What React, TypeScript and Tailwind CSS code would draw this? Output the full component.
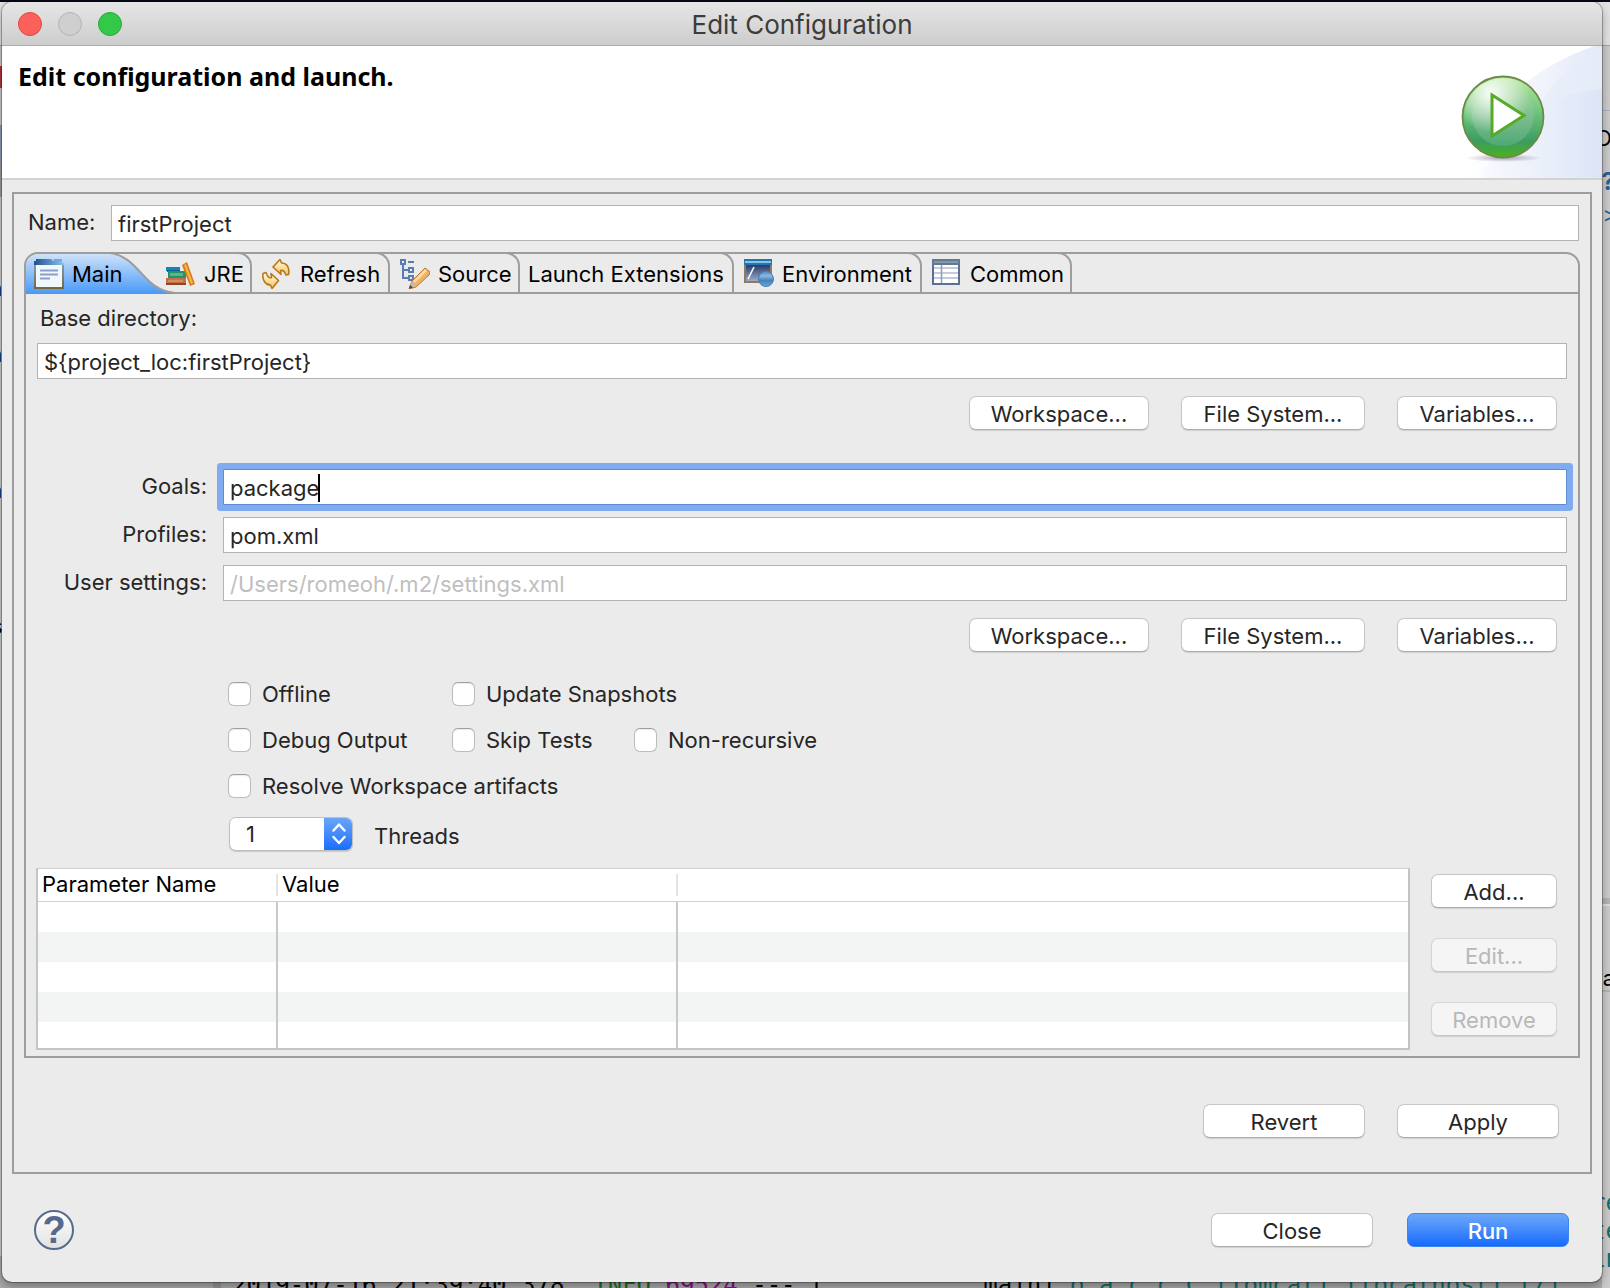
import type { ReactNode } from 'react';

const textField =
  'h-9 w-full min-w-0 border border-[#b3b3b3] bg-white px-[6px] pt-[2px] text-[22px] text-[#262626] outline-none';

const pushButton =
  'h-[34px] shrink-0 rounded-[7px] border border-[#c6c6c6] border-b-[#adadad] bg-white pt-[2px] text-[22px] leading-none text-[#262626] shadow-[0_1px_1px_rgba(0,0,0,0.12)] disabled:border-[#d5d5d5] disabled:border-b-[#c8c8c8] disabled:bg-[#f5f5f5] disabled:text-[#b8b8b8]';

function MainIcon() {
  return (
    <svg width="30" height="30" viewBox="0 0 30 30">
      <defs>
        <linearGradient id="mainBar" x1="0" x2="1">
          <stop offset="0" stopColor="#1f4f8c" />
          <stop offset="1" stopColor="#8fc4ea" />
        </linearGradient>
        <linearGradient id="mainFrame" x1="0" y1="0" x2="0" y2="1">
          <stop offset="0" stopColor="#7f9fb5" />
          <stop offset="1" stopColor="#77683e" />
        </linearGradient>
      </defs>
      <rect x="1" y="5" width="28" height="24" fill="#f0f8fb" stroke="url(#mainFrame)" strokeWidth="2" />
      <path d="M2 0H17L19 2H28V4H30V6H0V2H2Z" fill="url(#mainBar)" />
      <path d="M19 0h9v2h-8z" fill="#76a9d6" />
      <path d="M6 11.5H24M6 15.5H24M6 19.5H16" stroke="#8a9fd0" strokeWidth="2" />
    </svg>
  );
}

function JreIcon() {
  return (
    <svg width="30" height="30" viewBox="0 0 30 30">
      <g transform="translate(0 4)">
        <rect y="4" width="14" height="4" fill="#1484bd" />
        <rect x="1" y="7" width="13" height="2" fill="#12608c" />
        <rect x="2" y="8" width="18" height="8" fill="#25916c" />
        <rect x="4" y="10" width="13" height="3" fill="#59b783" />
        <rect y="15" width="20" height="7" fill="#c2714a" />
        <rect x="2" y="17" width="15" height="2" fill="#d88c5e" />
        <rect y="20" width="20" height="2" fill="#8b4729" />
        <path d="M16 2L21 -1L29 21L24 23Z" fill="#d77a20" />
        <path d="M18 2L20 1L27 20L25 21Z" fill="#f4b83c" />
      </g>
    </svg>
  );
}

function RefreshIcon() {
  return (
    <svg width="30" height="30" viewBox="0 0 30 30">
      <defs>
        <linearGradient id="arrow" x1="0" y1="0" x2="0" y2="1">
          <stop offset="0" stopColor="#fffbe6" />
          <stop offset="1" stopColor="#f5c35a" />
        </linearGradient>
      </defs>
      <g fill="url(#arrow)" stroke="#b9771c" strokeWidth="1.6" strokeLinejoin="round">
        <path d="M11 8L18 0.5L19.5 4C25 4 28 9 26.500 15.500L24 16C22.500 12 20.500 11 18.500 11.500L19 15.500Z" />
        <path d="M16.500 21.500L10 29.500L8.500 26C3.500 26 0 21 1 14.500L4 13.500C5.500 17.500 7 19.500 9.500 18.500L9 14.500Z" />
      </g>
    </svg>
  );
}

function SourceIcon() {
  return (
    <svg width="30" height="30" viewBox="0 0 30 30">
      <g fill="none" stroke="#5b7bb4" strokeWidth="2">
        <rect x="1" y="1" width="4" height="4" />
        <path d="M8 3H14M3 6V19H9M3 11H9" />
        <rect x="9" y="9" width="4" height="4" />
        <rect x="9" y="17" width="4" height="4" />
      </g>
      <path d="M9 30L12 22L25 9L30 13L29 16L16 28Z" fill="#f2b163" stroke="#b87632" />
      <path d="M14 23L26 11" stroke="#fbdca6" strokeWidth="2.500" />
      <path d="M12 22L17 27L9 30Z" fill="#cfb8a0" />
      <path d="M10 26L13 28.500L9 30Z" fill="#51443b" />
    </svg>
  );
}

function EnvironmentIcon() {
  return (
    <svg width="30" height="30" viewBox="0 0 30 30">
      <defs>
        <linearGradient id="screen" x1="0" y1="0" x2="0" y2="1">
          <stop offset="0" stopColor="#1c3565" />
          <stop offset="1" stopColor="#a6b2cb" />
        </linearGradient>
        <linearGradient id="globe" x1="0" y1="0" x2="0" y2="1">
          <stop offset="0" stopColor="#5a90c6" />
          <stop offset="0.300" stopColor="#8db7de" />
          <stop offset="0.600" stopColor="#4382bb" />
          <stop offset="1" stopColor="#6fa8d4" />
        </linearGradient>
      </defs>
      <rect x="1" y="5" width="26" height="18" fill="url(#screen)" stroke="#8d7d5a" strokeWidth="2" />
      <rect width="28" height="6" fill="#2c72ab" />
      <rect x="1" y="2" width="26" height="2" fill="#7cc6ec" />
      <path d="M4 20L10 8" stroke="#fff" strokeWidth="1.6" />
      <circle cx="22" cy="20" r="7.500" fill="url(#globe)" stroke="#4480b5" />
    </svg>
  );
}

function CommonIcon() {
  return (
    <svg width="30" height="30" viewBox="0 0 30 30">
      <rect x="1" y="1" width="26" height="24" fill="#fff" stroke="#5c7094" strokeWidth="2" />
      <rect width="28" height="6" fill="#62798f" />
      <path d="M2 3H26" stroke="#8fa3b5" strokeWidth="1.500" />
      <path d="M2 9H26M2 14H26M2 19H26" stroke="#c5cbd9" strokeWidth="2" />
      <path d="M9.500 6V24" stroke="#8f9cb8" strokeWidth="1.500" />
    </svg>
  );
}

// Blue swoosh of the banner with the run button on top of it
function BannerArt() {
  return (
    <svg width="160" height="132" viewBox="0 0 160 132" className="shrink-0">
      <defs>
        <linearGradient id="swoosh" x1="0" x2="1">
          <stop offset="0.100" stopColor="#fff" />
          <stop offset="1" stopColor="#e3eaf8" />
        </linearGradient>
        <linearGradient id="swooshInner" x1="0" x2="1">
          <stop offset="0" stopColor="#f8fafe" />
          <stop offset="1" stopColor="#dce5f6" />
        </linearGradient>
        <linearGradient id="ball" x1="0" y1="0" x2="0" y2="1">
          <stop offset="0" stopColor="#b5e89b" />
          <stop offset="0.450" stopColor="#6cc47c" />
          <stop offset="0.800" stopColor="#3c9c60" />
          <stop offset="1" stopColor="#47b41c" />
        </linearGradient>
        <linearGradient id="ballInner" x1="0" y1="0" x2="0" y2="1">
          <stop offset="0" stopColor="#a9dd9c" />
          <stop offset="0.500" stopColor="#7fbf8e" />
          <stop offset="1" stopColor="#4fa877" />
        </linearGradient>
        <radialGradient id="gloss" cx="0.350" cy="0.200" r="0.500">
          <stop offset="0" stopColor="#fff" stopOpacity="0.950" />
          <stop offset="1" stopColor="#fff" stopOpacity="0" />
        </radialGradient>
        <radialGradient id="shade">
          <stop offset="0" stopColor="#8a7f90" stopOpacity="0.700" />
          <stop offset="1" stopColor="#8a7f90" stopOpacity="0" />
        </radialGradient>
      </defs>
      <path d="M10 132C30 80 80 25 152 0H160V132Z" fill="url(#swoosh)" />
      <path d="M60 132C80 80 110 25 160 1V132Z" fill="#e6edf9" fillOpacity="0.6" />
      <path d="M40 132C60 75 110 48 160 43V132Z" fill="url(#swooshInner)" />
      <ellipse cx="62" cy="112" rx="38" ry="4" fill="url(#shade)" />
      <circle cx="61" cy="71" r="40.500" fill="url(#ball)" stroke="#6f8a48" strokeWidth="1.800" />
      <circle cx="61" cy="69" r="31" fill="url(#ballInner)" />
      <circle cx="61" cy="71" r="39" fill="url(#gloss)" />
      <path d="M50 49L82 69.500L50 90Z" fill="#fff" stroke="#55aa26" strokeWidth="3" />
    </svg>
  );
}

interface TabProps {
  label: string;
  className: string;
  icon?: ReactNode;
}

function Tab({ label, className, icon }: TabProps) {
  return (
    <button
      type="button"
      role="tab"
      aria-selected={false}
      className={`-mt-[2px] flex h-10 shrink-0 items-center gap-2 whitespace-nowrap rounded-tr-[14px] border-t-2 border-r-2 border-[#9d9d9d] pt-[2px] text-[22px] text-black ${className}`}
    >
      {icon}
      {label}
    </button>
  );
}

function CheckOption({ id, label, className = '' }: { id: string; label: string; className?: string }) {
  return (
    <div className={`flex h-6 items-center whitespace-nowrap ${className}`}>
      <input
        id={id}
        type="checkbox"
        className="mr-[11px] h-6 w-[23px] shrink-0 appearance-none rounded-[6px] border border-[#bcbcbc] border-t-[#9f9f9f] bg-white shadow-[inset_0_1px_1px_rgba(0,0,0,0.08)]"
      />
      <label htmlFor={id}>{label}</label>
    </div>
  );
}

function BrowseButtons({ className }: { className: string }) {
  return (
    <div className={`flex justify-end gap-8 pr-[10px] ${className}`}>
      <button type="button" className={`w-[180px] ${pushButton}`}>Workspace...</button>
      <button type="button" className={`w-[184px] ${pushButton}`}>File System...</button>
      <button type="button" className={`w-[160px] ${pushButton}`}>Variables...</button>
    </div>
  );
}

// The slices of the IDE that show around the dialog
function Backdrop() {
  return (
    <div aria-hidden="true" className="absolute inset-0 overflow-hidden bg-[#cbcbcb] text-[22px] leading-7">
      <div className="absolute inset-x-0 top-0 h-[46px] border-t-2 border-b border-t-[#050a14] border-b-[#a5a5a5] bg-[#e2e2e2]" />
      <div className="absolute top-[110px] right-0 h-px w-2 bg-[#a9b0c4]" />
      <div className="absolute top-[898px] right-0 h-2 w-2 border-b-2 border-[#dedede] bg-[#b4b4b4]" />
      <div className="absolute top-[990px] right-0 h-[2px] w-2 bg-[#b4b4b4]" />
      <div className="absolute top-[66px] left-0 h-[22px] w-[2px] bg-[#b5373c]" />
      <div className="absolute top-[125px] left-0 h-10 w-[2px] bg-[#8d9db0]" />
      <div className="absolute top-[165px] left-0 h-8 w-[2px] bg-[#9c9c9c]" />
      <span className="absolute top-[274px] -left-[10px] text-black">a</span>
      <span className="absolute top-[340px] -left-[10px] text-black">a</span>
      <span className="absolute top-[476px] -left-[10px] text-black">a</span>
      <span className="absolute top-[612px] -left-[9px] text-black">s</span>
      <span className="absolute -right-[15px] top-[124px] text-black">Du</span>
      <span className="absolute -right-[5px] top-[168px] text-2xl leading-7 font-bold text-[#2b6096]">?</span>
      <span className="absolute -right-[7px] top-[200px] text-[#2b6096]">&gt;</span>
      <span className="absolute -right-[5px] top-[964px] text-black">a</span>
      <div className="absolute -right-[10px] top-[1189px] font-['DejaVu_Sans_Mono',monospace] text-2xl leading-7 text-[#0f6f68]">
        <p>re</p>
        <p>te</p>
        <p>in</p>
      </div>
      <div className="absolute right-2 bottom-0 left-0 h-8 bg-[#ababab]" />
      <div className="absolute bottom-0 left-[213px] h-8 w-2 bg-[#979797]" />
      <pre className="absolute top-[1271px] left-[232px] font-['DejaVu_Sans_Mono',monospace] text-2xl leading-7 text-black">
        2019-07-16 21:39:40.378  <span className="text-[#17701c]">INFO</span>{' '}
        <span className="text-[#7d1780]">69524</span>
        {' --- [           main] '}
        <span className="text-[#0f6f68]">o.a.c.c.C.[Tomcat].[localhost].[/]</span>
      </pre>
    </div>
  );
}

export default function App() {
  return (
    <div className="relative min-h-screen overflow-hidden pt-[2px] pr-2 pb-[6px] pl-[2px] font-[Inter,sans-serif] text-[22px] leading-7 text-[#262626]">
      <Backdrop />

      <div className="relative overflow-hidden rounded-[10px] bg-[#ebebeb] shadow-[0_0_0_1px_rgba(0,0,0,0.25),0_4px_10px_rgba(0,0,0,0.35)]">
        {/* Title bar */}
        <div className="flex h-11 items-center border-b border-[#acacac] bg-gradient-to-b from-[#e6e6e6] to-[#cdcdcd] px-4">
          <div className="flex flex-1 gap-4">
            <button type="button" aria-label="Close window" className="size-6 rounded-full border border-[#e2463f] bg-[#fc605b]" />
            <button type="button" aria-label="Minimize window" disabled className="size-6 rounded-full border border-[#b3b3b3] bg-[#cfcfcf]" />
            <button type="button" aria-label="Zoom window" className="size-6 rounded-full border border-[#27aa35] bg-[#34c84a]" />
          </div>
          <h1 className="pt-[2px] text-[26px] text-[#3c3c3c]">Edit Configuration</h1>
          <div className="flex-1" />
        </div>

        {/* Banner */}
        <header className="flex justify-between border-b-2 border-[#d2d2d2] bg-white">
          <h2 className="pt-[14px] pl-4 font-['Noto_Sans',sans-serif] text-[25px] leading-8 font-bold text-black">
            Edit configuration and launch.
          </h2>
          <BannerArt />
        </header>

        <section className="mx-[10px] mt-3 border-2 border-[#9d9d9d] px-[10px] pt-[11px] pb-[34px]">
          <div className="flex items-center pr-px">
            <label htmlFor="name" className="w-[87px] shrink-0 pb-[2px] pl-1">Name:</label>
            <input id="name" type="text" defaultValue="firstProject" className={textField} />
          </div>

          {/* Tab folder */}
          <div className="mt-[11px] rounded-t-[14px] border-2 border-[#9d9d9d]">
            <div role="tablist" className="flex h-10 border-b-2 border-[#9d9d9d]">
              <button
                type="button"
                role="tab"
                aria-selected={true}
                className="relative flex h-[38px] w-[130px] shrink-0 items-center pt-[2px] pl-2 text-black"
              >
                <svg width="150" height="42" viewBox="0 0 150 42" className="absolute -top-[2px] left-0">
                  <defs>
                    <linearGradient id="tabFill" x1="0" y1="0" x2="0" y2="1">
                      <stop offset="0" stopColor="#cfe2f9" />
                      <stop offset="1" stopColor="#4899f8" />
                    </linearGradient>
                  </defs>
                  <path d="M0 42V12C2 7 6 3 12 2H86C116 6 118 38 148 41V42Z" fill="url(#tabFill)" />
                  <path d="M84 1C114 5 116 38 149 41" fill="none" stroke="#9d9d9d" strokeWidth="2" />
                </svg>
                <span className="relative flex items-center gap-2">
                  <MainIcon />
                  Main
                </span>
              </button>
              <Tab label="JRE" icon={<JreIcon />} className="w-[96px] pl-[10px]" />
              <Tab label="Refresh" icon={<RefreshIcon />} className="w-[138px] pl-[10px]" />
              <Tab label="Source" icon={<SourceIcon />} className="w-[130px] pl-[10px]" />
              <Tab label="Launch Extensions" className="w-[214px] pl-2" />
              <Tab label="Environment" icon={<EnvironmentIcon />} className="w-[188px] pl-[10px]" />
              <Tab label="Common" icon={<CommonIcon />} className="w-[150px] pl-[10px]" />
            </div>

            <div className="px-[11px] pt-[10px] pb-[6px]">
              <label htmlFor="base" className="mb-[11px] block pl-[3px]">Base directory:</label>
              <input id="base" type="text" defaultValue="${project_loc:firstProject}" className={`block ${textField}`} />
              <BrowseButtons className="mt-[17px]" />

              <div className="mt-[39px] grid grid-cols-[186px_1fr] items-center gap-y-3">
                <label htmlFor="goals" className="pr-4 pb-[2px] text-right">Goals:</label>
                <div className="relative">
                  <input
                    id="goals"
                    type="text"
                    defaultValue="package"
                    className="block h-9 w-full rounded-[1px] border border-[#5d8cd2] bg-white px-[6px] pt-[2px] text-[22px] outline-none ring-6 ring-[#80abee]"
                  />
                  <span className="absolute top-[5px] left-[95px] h-7 w-[2px] bg-black" />
                </div>
                <label htmlFor="profiles" className="pr-4 pb-[2px] text-right">Profiles:</label>
                <input id="profiles" type="text" defaultValue="pom.xml" className={textField} />
                <label htmlFor="settings" className="pr-4 pb-[2px] text-right">User settings:</label>
                <input
                  id="settings"
                  type="text"
                  placeholder="/Users/romeoh/.m2/settings.xml"
                  className={`placeholder:text-[#bfbfbf] ${textField}`}
                />
              </div>
              <BrowseButtons className="mt-[17px]" />

              <div className="mt-[30px] grid grid-cols-[224px_182px_1fr] gap-y-[22px] pl-[191px]">
                <CheckOption id="offline" label="Offline" />
                <CheckOption id="snapshots" label="Update Snapshots" className="col-span-2" />
                <CheckOption id="debug" label="Debug Output" />
                <CheckOption id="skip" label="Skip Tests" />
                <CheckOption id="nonrecursive" label="Non-recursive" />
                <CheckOption id="resolve" label="Resolve Workspace artifacts" className="col-span-3" />
              </div>

              <div className="mt-[19px] flex h-[34px] items-center pl-48">
                <div className="relative h-[34px] w-[124px] overflow-hidden rounded-[7px] border border-[#c0c0c0] bg-white shadow-[0_1px_1px_rgba(0,0,0,0.15)]">
                  <select id="threads" defaultValue="1" className="h-full w-full appearance-none bg-transparent pl-4 text-[22px] text-[#262626] outline-none">
                    <option>1</option>
                    <option>2</option>
                    <option>4</option>
                  </select>
                  <div className="pointer-events-none absolute -top-px -right-px flex h-[34px] w-[29px] items-center justify-center bg-gradient-to-b from-[#6ba6f8] to-[#126bfd]">
                    <svg width="14" height="22" viewBox="0 0 14 22" fill="none" stroke="#fff" strokeWidth="2.400" strokeLinecap="round" strokeLinejoin="round">
                      <path d="M1.500 7.500L7 1.500L12.500 7.500M1.500 14L7 20L12.500 14" />
                    </svg>
                  </div>
                </div>
                <label htmlFor="threads" className="pt-1 pl-[21px]">Threads</label>
              </div>

              <div className="mt-[17px] -ml-px flex">
                <div className="min-w-0 flex-1 border-2 border-t border-[#c4c4c4] border-t-[#d0d0d0] bg-white">
                  <table className="w-full table-fixed border-separate border-spacing-0 text-left text-black">
                    <colgroup>
                      <col className="w-[240px]" />
                      <col className="w-[400px]" />
                      <col />
                    </colgroup>
                    <thead>
                      <tr>
                        <th className="h-[33px] border-b border-[#d0d0d0] p-0 font-normal">
                          <div className="h-[22px] border-r-2 border-[#e4e4e4] pl-1 leading-5">Parameter Name</div>
                        </th>
                        <th className="border-b border-[#d0d0d0] p-0 font-normal">
                          <div className="h-[22px] border-r-2 border-[#e4e4e4] pl-1 leading-5">Value</div>
                        </th>
                        <th className="border-b border-[#d0d0d0] p-0" />
                      </tr>
                    </thead>
                    <tbody>
                      {Array.from({ length: 5 }).map((_, i) => (
                        <tr key={i} className="h-[30px] last:h-[26px] even:bg-[#f3f5f4]">
                          <td className="border-r-2 border-[#c8c8c8] p-0" />
                          <td className="border-r-2 border-[#c8c8c8] p-0" />
                          <td className="p-0" />
                        </tr>
                      ))}
                    </tbody>
                  </table>
                </div>
                <div className="ml-[21px] flex w-[136px] flex-col gap-[30px] pt-[6px] pr-[10px]">
                  <button type="button" className={pushButton}>Add...</button>
                  <button type="button" disabled className={pushButton}>Edit...</button>
                  <button type="button" disabled className={pushButton}>Remove</button>
                </div>
              </div>
            </div>
          </div>

          <div className="mt-[46px] flex justify-end gap-8 pr-[21px]">
            <button type="button" className={`w-[162px] ${pushButton}`}>Revert</button>
            <button type="button" className={`w-[162px] ${pushButton}`}>Apply</button>
          </div>
        </section>

        {/* Footer */}
        <footer className="flex items-center gap-[34px] pt-9 pr-[33px] pb-8 pl-8">
          <button
            type="button"
            aria-label="Help"
            className="mr-auto flex size-10 items-center justify-center rounded-full border-2 border-[#566b8c] bg-gradient-to-b from-white to-[#e2e2e2] font-['Liberation_Sans',sans-serif] text-[38px] leading-none font-bold text-[#566b8c]"
          >
            ?
          </button>
          <button type="button" className={`w-[162px] ${pushButton}`}>Close</button>
          <button
            type="button"
            className="h-[34px] w-[162px] rounded-[7px] border border-[#3d84ee] bg-gradient-to-b from-[#6ca7f8] to-[#116afd] pt-[2px] text-[22px] leading-none font-medium text-white"
          >
            Run
          </button>
        </footer>
      </div>
    </div>
  );
}
